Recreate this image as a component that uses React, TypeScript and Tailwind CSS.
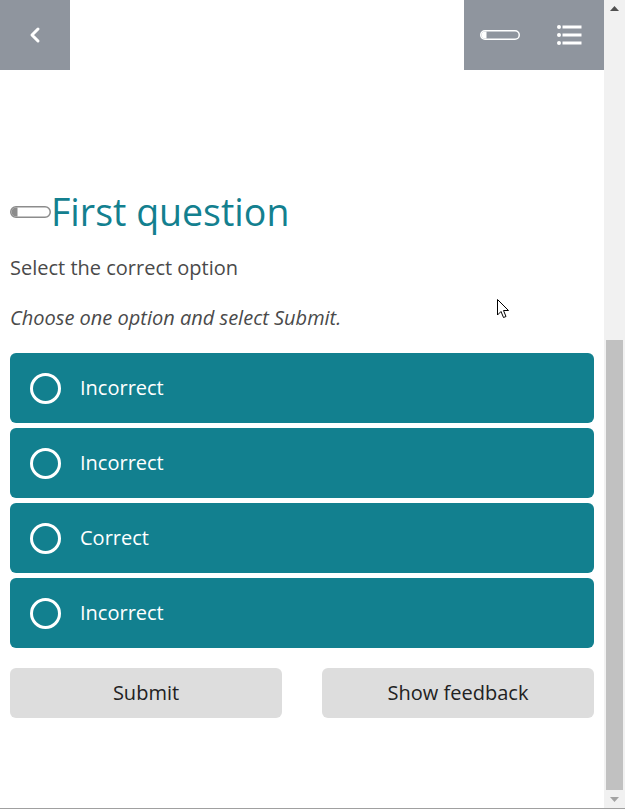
import React from "react";

const options = ["Incorrect", "Incorrect", "Correct", "Incorrect"];

function Pill({ stroke, w, h, className }: { stroke: string; w: number; h: number; className?: string }) {
  const r = h / 2 - 0.75;
  return (
    <svg width={w} height={h} viewBox={`0 0 ${w} ${h}`} className={className} fill="none">
      <rect x="0.75" y="0.75" width={w - 1.5} height={h - 1.5} rx={r} stroke={stroke} strokeWidth="1.5" />
      <path d={`M${h / 2} 1.5 H${h / 2 + 1.5} V${h - 1.5} H${h / 2} A${h / 2 - 1.5} ${h / 2 - 1.5} 0 0 1 ${h / 2} 1.5 Z`} fill={stroke} />
    </svg>
  );
}

export default function App() {
  return (
    <div
      className="relative w-[625px] h-[809px] overflow-hidden bg-white flex flex-col"
      style={{ fontFamily: "'Open Sans', 'Noto Sans', sans-serif" }}
    >
      <div className="flex flex-1 min-h-0">
        <div className="w-[604px] flex flex-col">
          <header className="h-[70px] flex justify-between shrink-0">
            <button className="w-[70px] h-[70px] bg-[#8f959e] flex items-center justify-center">
              <svg width="14" height="18" viewBox="0 0 14 18" fill="none">
                <polyline points="10,3 4,9 10,15" stroke="white" strokeWidth="3" strokeLinecap="round" strokeLinejoin="round" />
              </svg>
            </button>
            <div className="w-[140px] h-[70px] bg-[#8f959e] flex items-center pl-[16px]">
              <Pill stroke="#ffffff" w={40} h={10} />
              <svg className="ml-[37px]" width="25" height="22" viewBox="0 0 25 22" fill="white">
                <circle cx="2" cy="3" r="2" />
                <circle cx="2" cy="11" r="2" />
                <circle cx="2" cy="19" r="2" />
                <rect x="5.5" y="1.5" width="19" height="3" />
                <rect x="5.5" y="9.5" width="19" height="3" />
                <rect x="5.5" y="17.5" width="19" height="3" />
              </svg>
            </div>
          </header>

          <main className="px-[10px]">
            <h1 className="mt-[120px] flex items-center text-[37.5px] leading-[43px] text-[#13808f] font-normal">
              <Pill stroke="#8c8c8c" w={41} h={12} className="shrink-0" />
              <span>First question</span>
            </h1>
            <p className="mt-[21px] text-[20px] leading-[27px] text-[#4a4a4a]">Select the correct option</p>
            <p className="mt-[23px] text-[20px] leading-[27px] text-[#4a4a4a] italic">
              Choose one option and select Submit.
            </p>

            <div className="mt-[22px] flex flex-col gap-[5px]">
              {options.map((o, i) => (
                <div key={i} className="h-[70px] rounded-[6px] bg-[#12808f] flex items-center pl-[20px]">
                  <span className="w-[31px] h-[31px] rounded-full border-[3.5px] border-white shrink-0" />
                  <span className="ml-[19px] text-white text-[20px]">{o}</span>
                </div>
              ))}
            </div>

            <div className="mt-[20px] grid grid-cols-2 gap-[40px]">
              <button className="h-[50px] rounded-[6px] bg-[#dddddd] text-[20px] text-[#222222]">Submit</button>
              <button className="h-[50px] rounded-[6px] bg-[#dddddd] text-[20px] text-[#222222]">Show feedback</button>
            </div>
          </main>
        </div>

        <div className="w-[21px] bg-[#f1f1f1] flex flex-col items-center">
          <div className="h-[17px] flex items-center justify-center">
            <svg width="9" height="5" viewBox="0 0 9 5">
              <polygon points="0,5 9,5 4.5,0" fill="#505050" />
            </svg>
          </div>
          <div className="flex-1 w-full flex flex-col justify-end px-[2px] pb-[1px]">
            <div className="h-[450px] bg-[#c1c1c1]" />
          </div>
          <div className="h-[17px] flex items-center justify-center">
            <svg width="9" height="5" viewBox="0 0 9 5">
              <polygon points="0,0 9,0 4.5,5" fill="#a3a3a3" />
            </svg>
          </div>
        </div>
      </div>
      <div className="h-px bg-[#a0a0a0] shrink-0" />

      <svg className="absolute left-[497px] top-[299px]" width="13" height="20" viewBox="0 0 13 20">
        <path
          d="M0.5 0.5 L0.5 16 L4 12.5 L6.5 18.5 L9 17.5 L6.5 11.5 L11.5 11.5 Z"
          fill="white"
          stroke="black"
          strokeWidth="1"
          strokeLinejoin="round"
        />
      </svg>
    </div>
  );
}
